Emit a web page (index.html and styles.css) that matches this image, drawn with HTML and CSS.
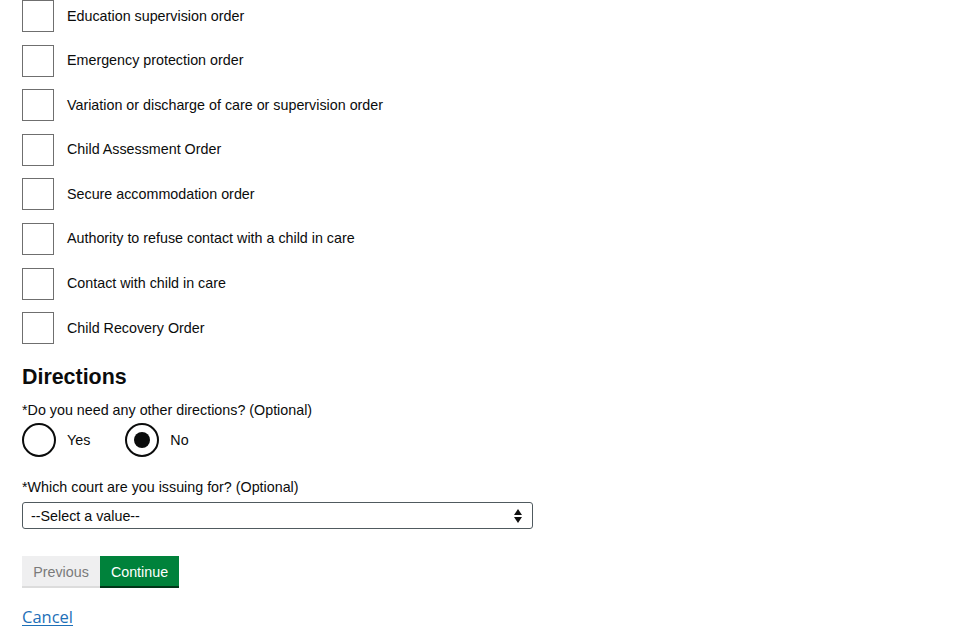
FILE: index.html
```html
<!DOCTYPE html>
<html>
<head>
<meta charset="utf-8">
<link rel="stylesheet" href="styles.css">
</head>
<body>
<main class="page">
  <div class="checks">
    <label class="check"><span class="box"></span><span class="ctext">Education supervision order</span></label>
    <label class="check"><span class="box"></span><span class="ctext">Emergency protection order</span></label>
    <label class="check"><span class="box"></span><span class="ctext">Variation or discharge of care or supervision order</span></label>
    <label class="check"><span class="box"></span><span class="ctext">Child Assessment Order</span></label>
    <label class="check"><span class="box"></span><span class="ctext">Secure accommodation order</span></label>
    <label class="check"><span class="box"></span><span class="ctext">Authority to refuse contact with a child in care</span></label>
    <label class="check"><span class="box"></span><span class="ctext">Contact with child in care</span></label>
    <label class="check"><span class="box"></span><span class="ctext">Child Recovery Order</span></label>
  </div>

  <h2 class="heading">Directions</h2>
  <div class="field-label">*Do you need any other directions? (Optional)</div>
  <div class="radios">
    <label class="radio"><span class="circle"></span><span class="rtext">Yes</span></label>
    <label class="radio"><span class="circle checked"></span><span class="rtext">No</span></label>
  </div>

  <div class="field-label court-label">*Which court are you issuing for? (Optional)</div>
  <div class="select">
    <span class="select-text">--Select a value--</span>
    <svg class="arrows" width="8" height="14" viewBox="0 0 8 14"><path d="M4 0 L8 6 L0 6 Z M0 8 L8 8 L4 14 Z" fill="#111"/></svg>
  </div>

  <div class="buttons">
    <button class="btn btn-prev">Previous</button>
    <button class="btn btn-continue">Continue</button>
  </div>

  <a class="cancel" href="#">Cancel</a>
</main>
</body>
</html>
```

FILE: styles.css
```css
html, body {
  margin: 0;
  padding: 0;
  background: #fff;
}
body {
  font-family: "Liberation Sans", Arial, sans-serif;
  color: #0b0c0c;
}
.page {
  padding: 0 22px;
}
.checks {
  display: flex;
  flex-direction: column;
  gap: 12.6px;
}
.check {
  display: flex;
  align-items: center;
  height: 32px;
}
.box {
  box-sizing: border-box;
  width: 32px;
  height: 32px;
  border: 1px solid #6f6f6f;
  flex: none;
}
.ctext {
  margin-left: 13px;
  font-size: 14.3px;
  margin-top: -1px;
}
.heading {
  margin: 20px 0 0;
  font-size: 21.4px;
  font-weight: bold;
  line-height: 26px;
  color: #0b0c0c;
}
.field-label {
  font-size: 14.3px;
  line-height: 18px;
  margin-top: 11px;
}
.radios {
  display: flex;
  gap: 35px;
  margin-top: 4px;
}
.radio {
  display: flex;
  align-items: center;
}
.circle {
  box-sizing: border-box;
  width: 34px;
  height: 34px;
  border: 2px solid #0b0c0c;
  border-radius: 50%;
  position: relative;
  flex: none;
}
.circle.checked::after {
  content: "";
  position: absolute;
  left: 7px;
  top: 7px;
  width: 16px;
  height: 16px;
  border-radius: 50%;
  background: #0b0c0c;
}
.rtext {
  margin-left: 11px;
  font-size: 14.3px;
}
.court-label {
  margin-top: 21px;
}
.select {
  box-sizing: border-box;
  width: 511px;
  height: 27px;
  margin-top: 6px;
  border: 1px solid #505a5f;
  border-radius: 3px;
  display: flex;
  align-items: center;
  justify-content: space-between;
  padding: 0 10px 0 8px;
}
.select-text {
  font-size: 14.3px;
}
.arrows {
  display: block;
}
.buttons {
  display: flex;
  margin-top: 27px;
}
.btn {
  font-family: "Liberation Sans", Arial, sans-serif;
  font-size: 14.3px;
  border: 0;
  height: 30px;
  padding: 2px 8px 0;
  margin: 0;
  cursor: pointer;
}
.btn-prev {
  width: 78px;
  background: #efeff0;
  color: #7a7a7a;
  box-shadow: 0 2px 0 #dcdcdc;
}
.btn-continue {
  width: 79px;
  background: #00823b;
  color: #fff;
  box-shadow: 0 2px 0 #003618;
}
.cancel {
  display: inline-block;
  margin-top: 19px;
  font-family: "Open Sans", "Liberation Sans", sans-serif;
  font-size: 16.5px;
  color: #1d70b8;
  text-decoration: underline;
  text-underline-offset: 2px;
}
```
